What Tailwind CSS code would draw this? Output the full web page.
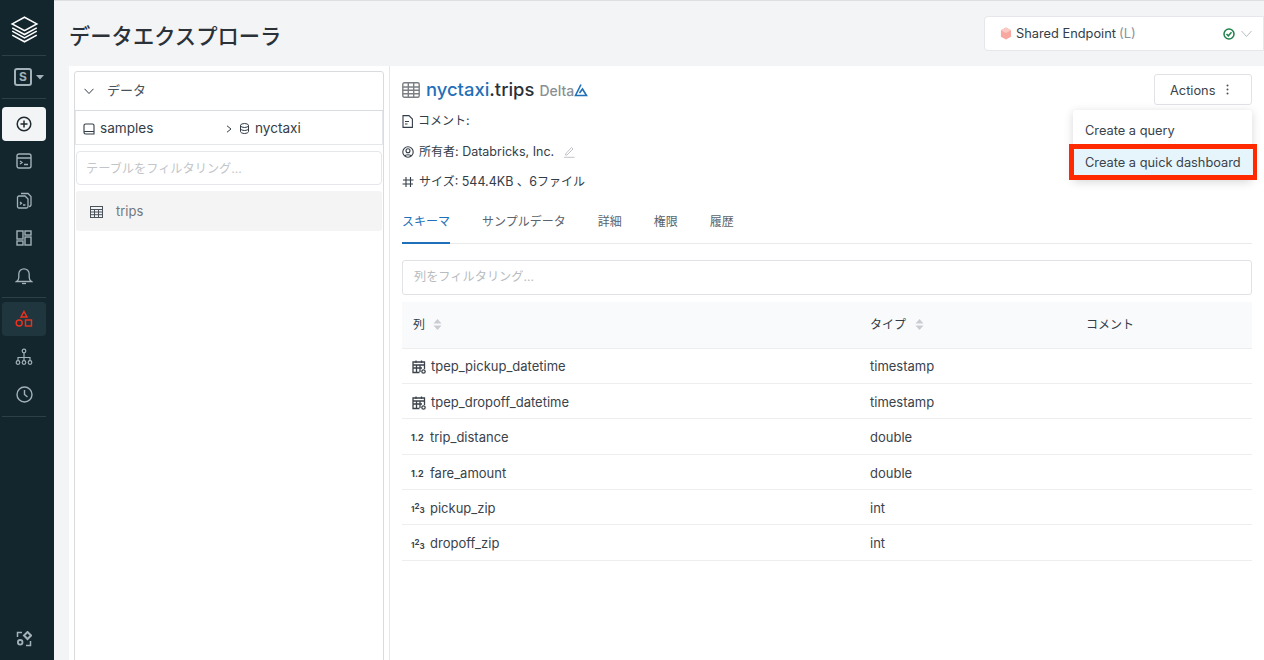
<!DOCTYPE html>
<html lang="ja">
<head>
    <meta charset="utf-8">
    <title>データエクスプローラ</title>
    <script src="https://cdn.jsdelivr.net/npm/@tailwindcss/browser@4"></script>
</head>
<body class="h-[660px] w-[1264px] overflow-hidden bg-[#f3f4f6] font-['Inter','Noto_Sans_CJK_JP',sans-serif] text-[13px] text-[#333d47]">
<div class="flex h-[660px]">
    <!-- Sidebar -->
    <aside class="flex w-[54px] shrink-0 flex-col items-start bg-[#13262e] pl-[2px] text-[#a3b1b8]">
        <div class="flex h-[56px] w-11 items-center justify-center border-b border-[#2d3f47] pt-[3px]">
            <svg class="h-[29px] w-[29px] text-white" viewBox="0 0 26 26" fill="none" stroke="currentColor" stroke-width="1.4"><path d="M13 2 24 8 13 14 2 8Z"/><path d="M2 11.500 13 17.500 24 11.500"/><path d="M2 14.500 13 20.500 24 14.500"/><path d="M2 18 13 24 24 18"/></svg>
        </div>
        <div class="flex h-[43px] w-11 items-center justify-start gap-[4px] border-b border-[#2d3f47] pl-[12px]">
            <span class="flex h-[18px] w-[18px] items-center justify-center rounded-[3px] border-2 border-[#a3b1b8] text-[12px] font-bold leading-none">S</span>
            <svg class="h-2 w-2" viewBox="0 0 8 8" fill="currentColor"><path d="M0 2h8L4 6.500z"/></svg>
        </div>
        <div class="mt-[8px] flex h-[34px] w-11 items-center justify-center rounded-[4px] bg-[#f3f4f6] text-[#1f2a30]">
            <svg class="h-4 w-4" viewBox="0 0 16 16" fill="none" stroke="currentColor" stroke-width="1.500"><circle cx="8" cy="8" r="6.800"/><path d="M8 4.500v7M4.500 8h7"/></svg>
        </div>
        <div class="mt-px flex h-[38px] w-11 items-center justify-center">
            <svg class="h-4 w-4" viewBox="0 0 16 16" fill="none" stroke="currentColor" stroke-width="1.400"><rect x="1" y="1" width="14" height="14" rx="2"/><path d="M1 5h14M4 8l2 1.500L4 11M8 11.500h4"/></svg>
        </div>
        <div class="mt-px flex h-[38px] w-11 items-center justify-center">
            <svg class="h-[17px] w-[17px]" viewBox="0 0 17 17" fill="none" stroke="currentColor" stroke-width="1.300"><path d="M5 1.500h7l3 3v8a2 2 0 0 1-2 2"/><path d="M3 4h6l3 3v7.500a1.500 1.500 0 0 1-1.500 1.500H3A1.500 1.500 0 0 1 1.500 14.500V5.500A1.500 1.500 0 0 1 3 4Z"/><path d="M4 10l1.500 1.200L4 12.500M7 13h2.500"/></svg>
        </div>
        <div class="flex h-[38px] w-11 items-center justify-center">
            <svg class="h-4 w-4" viewBox="0 0 16 16" fill="none" stroke="currentColor" stroke-width="1.400"><rect x="1" y="1" width="6" height="8"/><rect x="9" y="1" width="6" height="4"/><rect x="1" y="11" width="6" height="4"/><rect x="9" y="7" width="6" height="8"/></svg>
        </div>
        <div class="flex h-[41px] w-11 items-center justify-center border-b border-[#2d3f47] pb-[2px]">
            <svg class="h-[18px] w-[18px]" viewBox="0 0 18 18" fill="none" stroke="currentColor" stroke-width="1.300"><path d="M1.500 14.500h15c-1.500-1-2.300-2.200-2.300-4V7a5.200 5.200 0 0 0-10.400 0v3.500c0 1.800-.8 3-2.300 4Z"/><path d="M7 16.500h4"/></svg>
        </div>
        <div class="mt-[4px] flex h-[34px] w-11 items-center justify-center rounded-[4px] bg-[#20363f] text-[#f0311c]">
            <svg class="h-[18px] w-[18px]" viewBox="0 0 18 18" fill="none" stroke="currentColor" stroke-width="1.400"><path d="M9 1.500 12 7H6Z"/><circle cx="4.200" cy="13" r="3"/><rect x="10.500" y="10" width="6" height="6"/></svg>
        </div>
        <div class="mt-[2px] flex h-[38px] w-11 items-center justify-center">
            <svg class="h-[18px] w-[18px]" viewBox="0 0 18 18" fill="none" stroke="currentColor" stroke-width="1.200"><circle cx="9" cy="3" r="1.800"/><circle cx="3" cy="14.500" r="1.800"/><circle cx="9" cy="14.500" r="1.800"/><circle cx="15" cy="14.500" r="1.800"/><path d="M9 4.800v8M3 12.700V9.500h12v3.200"/></svg>
        </div>
        <div class="flex h-[41px] w-11 items-center justify-center border-b border-[#2d3f47] pb-[3px]">
            <svg class="h-[17px] w-[17px]" viewBox="0 0 17 17" fill="none" stroke="currentColor" stroke-width="1.400"><circle cx="8.500" cy="8.500" r="7.500"/><path d="M8.500 4v4.500l3 2.500"/></svg>
        </div>
        <div class="mt-auto mb-[13px] flex w-11 items-center justify-center">
            <svg class="h-[16px] w-[16px]" viewBox="0 0 16 16" fill="none" stroke="currentColor" stroke-width="1.500"><path d="M6 1.500H1.500V6M14.500 10v4.500H10"/><path d="M11.500 1 15 4.500 11.500 8 8 4.500Z" stroke-width="2"/><circle cx="4.200" cy="11.300" r="2.300" stroke-width="1.800"/></svg>
        </div>
    </aside>

    <div class="flex min-w-0 flex-1 flex-col border-t border-[#dcdfe2]">
        <!-- Page header -->
        <header class="flex h-[65px] shrink-0 items-start justify-between pl-[15px]">
            <h1 class="mt-[21px] text-[21.300px] leading-[28px] font-medium text-[#2b3138]">データエクスプローラ</h1>
            <div class="mt-[15px] flex h-[35px] w-[280px] items-center rounded-l-[4px] border border-[#e5e7ea] bg-white pr-[11px] pl-[15px]">
                <svg class="mr-[4px] h-[13px] w-[12px]" viewBox="0 0 13 13"><path d="M6.500 0 12 3v7l-5.500 3L1 10V3Z" fill="#f7a8a0"/><path d="M6.500 0 12 3 6.500 6 1 3Z" fill="#fbc9c3"/></svg>
                <span class="text-[12.800px] text-[#333d47]">Shared Endpoint</span>
                <span class="ml-[3px] text-[#8a9199]">(L)</span>
                <svg class="ml-auto h-3 w-3" viewBox="0 0 12 12" fill="none" stroke="#21814b" stroke-width="1.500"><circle cx="6" cy="6" r="5"/><path d="M3.500 6 5.300 7.800 8.500 4.300"/></svg>
                <svg class="ml-[6px] h-[11px] w-[11px]" viewBox="0 0 11 11" fill="none" stroke="#b8bdc2" stroke-width="1"><path d="M.5 3 5.500 8.500 10.500 3"/></svg>
            </div>
        </header>

        <!-- Content -->
        <main class="ml-[15px] flex min-h-0 flex-1 bg-white">
            <!-- Left panel -->
            <section class="w-[321px] shrink-0 border-r border-[#e5e7ea] pt-[5px] pr-[5px] pl-[5px]">
                <div class="h-[600px] rounded-t-[3px] border border-[#d9dcdf]">
                    <div class="flex h-[39px] items-center border-b border-[#d9dcdf] pl-[9px]">
                        <svg class="h-[10px] w-[10px]" viewBox="0 0 10 10" fill="none" stroke="#333d47" stroke-width="1"><path d="M.5 2.800 5 7.500 9.500 2.800"/></svg>
                        <span class="ml-[13px] text-[#4a525a]">データ</span>
                    </div>
                    <div class="flex h-[34px] items-center border-x border-b border-[#e5e7ea] pt-[2px] pl-[7px] text-[13.600px]">
                        <svg class="h-[12px] w-[12px]" viewBox="0 0 12 12" fill="none" stroke="#333d47" stroke-width="1.100"><path d="M1 9.500V2.500A1.500 1.500 0 0 1 2.500 1h7A1.500 1.500 0 0 1 11 2.500v8.500H2.500A1.500 1.500 0 0 1 1 9.500ZM1 9.500A1 1 0 0 1 2 8.500h9"/></svg>
                        <span class="ml-[5px] w-[125px]">samples</span>
                        <svg class="h-2 w-2" viewBox="0 0 8 8" fill="none" stroke="#333d47" stroke-width="1"><path d="M2 .8 6 4 2 7.200"/></svg>
                        <svg class="ml-[6px] h-[11px] w-[11px]" viewBox="0 0 11 11" fill="none" stroke="#333d47" stroke-width="1"><ellipse cx="5.500" cy="2.500" rx="4" ry="2"/><path d="M1.500 2.500v6c0 1 1.800 2 4 2s4-1 4-2v-6M1.500 5.500c0 1 1.800 2 4 2s4-1 4-2"/></svg>
                        <span class="ml-[5px]">nyctaxi</span>
                    </div>
                    <div class="mx-px mt-[6px] flex h-[34px] items-center rounded-[4px] border border-[#e5e7ea] pt-[2px] pl-[9px] text-[12.200px] text-[#c2c5c9]">テーブルをフィルタリング...</div>
                    <div class="mx-px mt-[6px] flex h-[40px] items-center rounded-[3px] bg-[#f4f4f4] pt-px pl-[14px] text-[#71787f]">
                        <svg class="h-3 w-[13px]" viewBox="0 0 13 12" fill="none" stroke="#4a525a" stroke-width="1"><rect x=".5" y=".5" width="12" height="11"/><path d="M.5 3.500h12M.5 6h12M.5 8.700h12M4.500 3.500v8M8.500 3.500v8"/></svg>
                        <span class="ml-[13px]">trips</span>
                    </div>
                </div>
            </section>

            <!-- Right panel -->
            <section class="relative min-w-0 flex-1 pt-[8px] pr-[12px] pl-[12px]">
                <div class="flex h-[31px] items-center">
                    <svg class="h-[16px] w-[18px]" viewBox="0 0 18 16" fill="none" stroke="#7b7f83" stroke-width="1.400"><rect x=".8" y=".8" width="16.400" height="14.400" rx="1.500"/><path d="M.8 5h16.400M.8 8.200h16.400M.8 11.700h16.400M6.300 1v14M11.700 1v14"/></svg>
                    <span class="ml-[6px] text-[18.400px] font-medium text-[#1f70b8]">nyctaxi</span><span class="text-[18.400px] font-medium text-[#2b3138]">.trips</span>
                    <span class="ml-[5px] pt-px text-[14px] font-medium text-[#8a8f94]">Delta</span>
                    <svg class="mt-px h-[14px] w-[14px]" viewBox="0 0 14 14" fill="none" stroke="#1f70b8" stroke-width="1.600"><path d="M7 1.500 1.500 12.500h11L8.500 6 5.500 10"/></svg>
                </div>
                <div class="mt-[6px] flex h-[20px] items-center text-[12.500px]">
                    <svg class="h-[13px] w-[11px]" viewBox="0 0 11 13" fill="none" stroke="#333d47" stroke-width="1.100"><path d="M1 .6h6L10.400 4v8.400H1ZM3 6.500h4M3 9h2.500"/></svg>
                    <span class="ml-[5px]"><span class="text-[12px]">コメント</span>:</span>
                </div>
                <div class="mt-[11px] flex h-[20px] items-center text-[12.500px]">
                    <svg class="h-3 w-3" viewBox="0 0 12 12" fill="none" stroke="#333d47" stroke-width="1.100"><circle cx="6" cy="6" r="5.200"/><circle cx="6" cy="4.800" r="2"/><path d="M2.800 10c.5-1.700 5.900-1.700 6.400 0"/></svg>
                    <span class="ml-[5px]"><span class="text-[12px]">所有者</span>: Databricks, Inc.</span>
                    <svg class="ml-[9px] h-3 w-3" viewBox="0 0 12 12" fill="none" stroke="#c0c4c8" stroke-width="1"><path d="M2.500 8 8.500 1.500l1.500 1.500L4 9H2.500ZM1 11.300h10.500"/></svg>
                </div>
                <div class="mt-[10px] flex h-[20px] items-center text-[12.500px]">
                    <svg class="h-3 w-3" viewBox="0 0 12 12" fill="none" stroke="#333d47" stroke-width="1.100"><path d="M4 1v10M8.500 1v10M1 4h10.500M.5 8h10.500"/></svg>
                    <span class="ml-[5px]"><span class="text-[12px]">サイズ</span>: 544.4KB 、6<span class="text-[12px]">ファイル</span></span>
                </div>

                <nav class="mt-[3px] flex h-[49px] gap-[32px] border-b border-[#e8eaec] text-[12px] text-[#5b636b]">
                    <a class="-mb-px flex items-center border-b-2 border-[#1f70b8] pt-[6px] text-[#1f70b8]">スキーマ</a>
                    <a class="-mb-px flex items-center border-b-2 border-transparent pt-[6px]">サンプルデータ</a>
                    <a class="-mb-px flex items-center border-b-2 border-transparent pt-[6px]">詳細</a>
                    <a class="-mb-px flex items-center border-b-2 border-transparent pt-[6px]">権限</a>
                    <a class="-mb-px flex items-center border-b-2 border-transparent pt-[6px]">履歴</a>
                </nav>

                <div class="mt-[16px] flex h-[35px] items-center rounded-[3px] border border-[#e0e2e5] pl-[11px] text-[12.200px] text-[#b8bcc0]">列をフィルタリング...</div>

                <table class="mt-[7px] w-full table-fixed border-collapse">
                    <thead>
                        <tr class="h-[46px] border-b border-[#eceef0] bg-[#f9fafb] text-left text-[12px] text-[#333d47]">
                            <th class="w-[458px] pl-[11px] font-normal">
                                <span class="flex items-center gap-[8px]">列
                                    <svg class="h-[11px] w-[9px]" viewBox="0 0 9 11" fill="#c9ccd0"><path d="M4.500 0 8.500 4.500H.5ZM.5 6.500h8L4.500 11Z"/></svg>
                                </span>
                            </th>
                            <th class="w-[216px] pl-[10px] font-normal">
                                <span class="flex items-center gap-[9px]">タイプ
                                    <svg class="h-[11px] w-[9px]" viewBox="0 0 9 11" fill="#c9ccd0"><path d="M4.500 0 8.500 4.500H.5ZM.5 6.500h8L4.500 11Z"/></svg>
                                </span>
                            </th>
                            <th class="pl-[10px] font-normal">コメント</th>
                        </tr>
                    </thead>
                    <tbody class="text-[13px] text-[#3a424a]">
                        <tr class="h-[35.400px] border-b border-[#eceef0]">
                            <td class="pt-[3px] pl-[10px]"><span class="flex items-center gap-[5px]"><svg class="h-[14px] w-[14px]" viewBox="0 0 14 14" fill="none" stroke="#3a424a" stroke-width="1.300"><path d="M7.500 12.500H1V2h11.500v7M1 5h11.500M4 .5V3M9.500.5V3M1 8h9M4.500 5v7M8 5v7"/><circle cx="11.500" cy="11.500" r="1.700"/></svg>tpep_pickup_datetime</span></td>
                            <td class="pt-[3px] pl-[10px]">timestamp</td><td></td>
                        </tr>
                        <tr class="h-[35.400px] border-b border-[#eceef0]">
                            <td class="pt-[3px] pl-[10px]"><span class="flex items-center gap-[5px]"><svg class="h-[14px] w-[14px]" viewBox="0 0 14 14" fill="none" stroke="#3a424a" stroke-width="1.300"><path d="M7.500 12.500H1V2h11.500v7M1 5h11.500M4 .5V3M9.500.5V3M1 8h9M4.500 5v7M8 5v7"/><circle cx="11.500" cy="11.500" r="1.700"/></svg>tpep_dropoff_datetime</span></td>
                            <td class="pt-[3px] pl-[10px]">timestamp</td><td></td>
                        </tr>
                        <tr class="h-[35.400px] border-b border-[#eceef0]">
                            <td class="pt-[3px] pl-[9px]"><span class="flex items-center gap-[5px]"><span class="w-[14px] whitespace-nowrap text-[9px] font-bold leading-none text-[#3a424a]">1.2</span>trip_distance</span></td>
                            <td class="pt-[3px] pl-[10px]">double</td><td></td>
                        </tr>
                        <tr class="h-[35.400px] border-b border-[#eceef0]">
                            <td class="pt-[3px] pl-[9px]"><span class="flex items-center gap-[5px]"><span class="w-[14px] whitespace-nowrap text-[9px] font-bold leading-none text-[#3a424a]">1.2</span>fare_amount</span></td>
                            <td class="pt-[3px] pl-[10px]">double</td><td></td>
                        </tr>
                        <tr class="h-[35.400px] border-b border-[#eceef0]">
                            <td class="pt-[3px] pl-[9px]"><span class="flex items-center gap-[5px]"><span class="flex w-[14px] items-start text-[8px] font-bold leading-none text-[#3a424a]"><span class="mt-[2px]">1</span><span class="-mt-[1px]">2</span><span class="mt-[3px]">3</span></span>pickup_zip</span></td>
                            <td class="pt-[3px] pl-[10px]">int</td><td></td>
                        </tr>
                        <tr class="h-[35.400px] border-b border-[#eceef0]">
                            <td class="pt-[3px] pl-[9px]"><span class="flex items-center gap-[5px]"><span class="flex w-[14px] items-start text-[8px] font-bold leading-none text-[#3a424a]"><span class="mt-[2px]">1</span><span class="-mt-[1px]">2</span><span class="mt-[3px]">3</span></span>dropoff_zip</span></td>
                            <td class="pt-[3px] pl-[10px]">int</td><td></td>
                        </tr>
                    </tbody>
                </table>

                <!-- Actions button and open menu -->
                <button class="absolute top-[8px] right-[12px] flex h-[31px] w-[98px] items-center rounded-[3px] border border-[#e0e2e5] bg-white pt-[2px] pl-[15px] text-[12.800px] text-[#3a424a]">
                    Actions
                    <svg class="mb-[2px] ml-[11px] h-[11px] w-[3px]" viewBox="0 0 3 11" fill="#4a525a"><circle cx="1.500" cy="1.500" r="1"/><circle cx="1.500" cy="5.500" r="1"/><circle cx="1.500" cy="9.500" r="1"/></svg>
                </button>
                <div class="absolute top-[44px] right-[12px] w-[179px] rounded-[3px] bg-white pt-[5px] pb-[1px] text-[12.800px] shadow-[0_2px_10px_rgba(0,0,0,0.16)]">
                    <div class="flex h-[32px] items-center pl-[12px] text-[#3a424a]">Create a query</div>
                    <div class="flex h-[32px] items-center whitespace-nowrap bg-[#e6f5fc] pl-[12px] text-[#3a424a]">Create a quick dashboard</div>
                    <div class="absolute top-[34px] left-[-4px] h-[36px] w-[188px] border-y-[5px] border-r-[4px] border-l-[5px] border-[#ff2a00]"></div>
                </div>
            </section>
        </main>
    </div>
</div>
</body>
</html>
